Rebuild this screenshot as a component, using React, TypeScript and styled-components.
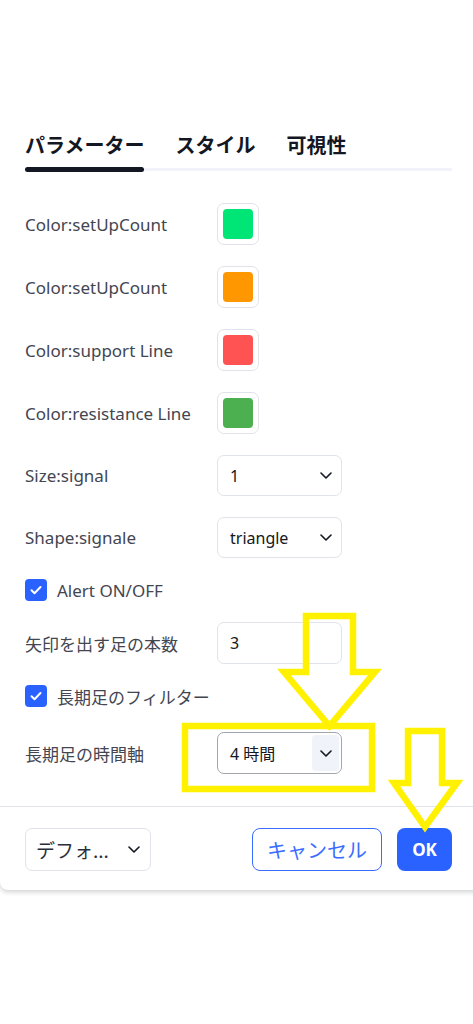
import styled, { createGlobalStyle } from "styled-components";

const GlobalStyle = createGlobalStyle`
  html, body {
    margin: 0;
    background: #ffffff;
  }
  body {
    overflow: hidden;
    font-family: "Noto Sans", "Noto Sans CJK JP", sans-serif;
  }
`;

const Page = styled.div`
  position: relative;
  width: 473px;
  height: 1024px;
  overflow: hidden;
`;

const Dialog = styled.div`
  width: 503px;
  background: #fff;
  border-radius: 0 0 8px 8px;
  box-shadow: 0 2px 5px rgba(19, 23, 34, 0.2);
`;

const Body = styled.div`
  padding: 133px 51px 32px 25px;
`;

const TabList = styled.div`
  display: flex;
  gap: 31px;
  border-bottom: 3px solid #f0f3fa;
  margin-bottom: 32px;
`;

const Tab = styled.div<{ $active?: boolean }>`
  position: relative;
  padding-bottom: 11px;
  font: 700 20px/24px "Noto Sans CJK JP", sans-serif;
  color: #131722;

  &::after {
    content: "";
    display: ${(p) => (p.$active ? "block" : "none")};
    position: absolute;
    left: 0;
    right: 0;
    bottom: -4px;
    height: 5px;
    border-radius: 3px;
    background: #131722;
  }
`;

const Fields = styled.div`
  display: flex;
  flex-direction: column;
  gap: 21px;
`;

const Row = styled.div<{ $h: number; $mt?: number }>`
  display: flex;
  align-items: center;
  height: ${(p) => p.$h}px;
  margin-top: ${(p) => p.$mt || 0}px;
`;

const Label = styled.div`
  width: 192px;
  flex: none;
  font-size: 17px;
  color: #434651;
  white-space: nowrap;
`;

const SwatchBox = styled.div`
  width: 42px;
  height: 42px;
  box-sizing: border-box;
  border: 1px solid #e0e3eb;
  border-radius: 7px;
  display: flex;
  align-items: center;
  justify-content: center;
`;

const Swatch = styled.div<{ $color: string }>`
  width: 30px;
  height: 30px;
  border-radius: 4px;
  background: ${(p) => p.$color};
`;

const Field = styled.div<{ $focused?: boolean }>`
  width: 125px;
  height: 100%;
  box-sizing: border-box;
  border: 1px solid ${(p) => (p.$focused ? "#a3a6af" : "#e0e3eb")};
  border-radius: 7px;
  display: flex;
  align-items: center;
  justify-content: space-between;
  padding: 0 ${(p) => (p.$focused ? 2 : 10)}px 0 12px;
  font-size: 16px;
  color: #131722;
`;

const ChevronBox = styled.span<{ $filled?: boolean }>`
  display: flex;
  align-items: center;
  justify-content: center;
  width: 27px;
  height: 36px;
  border-radius: 4px;
  background: ${(p) => (p.$filled ? "#f0f3fa" : "transparent")};
  margin-right: ${(p) => (p.$filled ? 0 : -8)}px;
`;

const CheckRow = styled.label`
  display: flex;
  align-items: center;
  gap: 10px;
  height: 22px;
  font-size: 17px;
  color: #434651;
`;

const CheckBox = styled.span`
  width: 22px;
  height: 22px;
  border-radius: 4px;
  background: #2962ff;
  display: flex;
  align-items: center;
  justify-content: center;
`;

const Footer = styled.div`
  display: flex;
  align-items: center;
  border-top: 1px solid #e0e3eb;
  padding: 21px 51px 19px 25px;
`;

const PresetSelect = styled.div`
  width: 126px;
  height: 43px;
  box-sizing: border-box;
  border: 1px solid #e0e3eb;
  border-radius: 7px;
  display: flex;
  align-items: center;
  justify-content: space-between;
  padding: 0 10px 0 10px;
  font: 400 19px "Noto Sans CJK JP", sans-serif;
  color: #2a2e39;
`;

const Spacer = styled.div`
  flex: 1;
`;

const CancelButton = styled.button`
  width: 130px;
  height: 43px;
  box-sizing: border-box;
  border: 1px solid #3a6dff;
  border-radius: 8px;
  background: #fff;
  color: #3a6dff;
  font: 400 20px "Noto Sans CJK JP", sans-serif;
  padding: 0;
`;

const OkButton = styled.button`
  width: 55px;
  height: 43px;
  margin-left: 15px;
  border: none;
  border-radius: 8px;
  background: #2962ff;
  color: #fff;
  font: 700 17px "Noto Sans", sans-serif;
  padding: 0;
`;

const Marks = styled.svg`
  position: absolute;
  left: 0;
  top: 0;
  pointer-events: none;
`;

const Chevron = () => (
  <svg width="12" height="7" viewBox="0 0 12 7">
    <path d="M1 1l5 5 5-5" fill="none" stroke="#131722" strokeWidth="1.6" strokeLinecap="round" strokeLinejoin="round" />
  </svg>
);

const Check = () => (
  <svg width="14" height="14" viewBox="0 0 14 14">
    <path d="M2.5 7.2l3 3 6-6.2" fill="none" stroke="#fff" strokeWidth="2" strokeLinecap="round" strokeLinejoin="round" />
  </svg>
);

const colors = [
  { label: "Color:setUpCount", color: "#00e676" },
  { label: "Color:setUpCount", color: "#ff9800" },
  { label: "Color:support Line", color: "#ff5252" },
  { label: "Color:resistance Line", color: "#4caf50" },
];

const App = () => {
  const yellow = "#fff100";
  return (
    <Page>
      <GlobalStyle />
      <Dialog>
        <Body>
          <TabList>
            <Tab $active>パラメーター</Tab>
            <Tab>スタイル</Tab>
            <Tab>可視性</Tab>
          </TabList>
          <Fields>
            {colors.map((c, i) => (
              <Row key={i} $h={42}>
                <Label>{c.label}</Label>
                <SwatchBox>
                  <Swatch $color={c.color} />
                </SwatchBox>
              </Row>
            ))}
            <Row $h={41}>
              <Label>Size:signal</Label>
              <Field>
                1
                <ChevronBox><Chevron /></ChevronBox>
              </Field>
            </Row>
            <Row $h={41}>
              <Label>Shape:signale</Label>
              <Field>
                triangle
                <ChevronBox><Chevron /></ChevronBox>
              </Field>
            </Row>
            <CheckRow>
              <CheckBox><Check /></CheckBox>
              Alert ON/OFF
            </CheckRow>
            <Row $h={42}>
              <Label>矢印を出す足の本数</Label>
              <Field>3</Field>
            </Row>
            <CheckRow>
              <CheckBox><Check /></CheckBox>
              長期足のフィルター
            </CheckRow>
            <Row $h={42} $mt={4}>
              <Label>長期足の時間軸</Label>
              <Field $focused>
                4 時間
                <ChevronBox $filled><Chevron /></ChevronBox>
              </Field>
            </Row>
          </Fields>
        </Body>
        <Footer>
          <PresetSelect>
            デフォ...
            <Chevron />
          </PresetSelect>
          <Spacer />
          <CancelButton>キャンセル</CancelButton>
          <OkButton>OK</OkButton>
        </Footer>
      </Dialog>

      <Marks width="473" height="1024" viewBox="0 0 473 1024">
        <g fill="none" stroke={yellow} strokeWidth="6.5" strokeLinejoin="miter">
          <rect x="185" y="726" width="187" height="63" />
          <path d="M306 616 L353 616 L353 672 L375 672 L329.5 726 L284 672 L306 672 Z" />
          <path d="M408 731 L442 731 L442 783 L457 783 L425 827 L394 783 L408 783 Z" />
        </g>
      </Marks>
    </Page>
  );
};

export default App;
